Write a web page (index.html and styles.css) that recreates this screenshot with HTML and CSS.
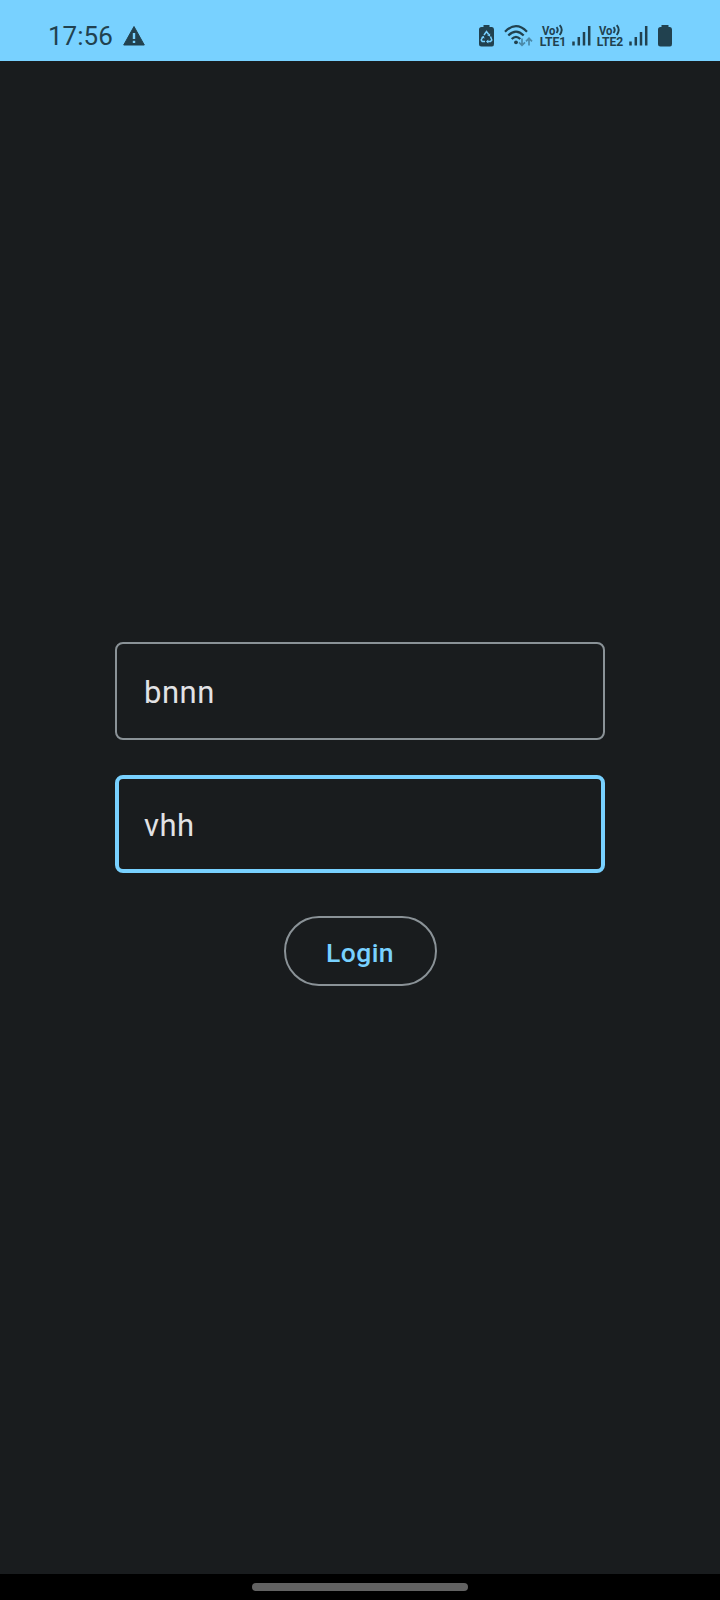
FILE: index.html
```html
<!DOCTYPE html>
<html lang="en">
<head>
<meta charset="utf-8">
<title>Login</title>
<link rel="stylesheet" href="styles.css">
</head>
<body>
<div class="screen">
  <header class="status">
    <span class="clock">17:56</span>
    <svg class="warning" width="24" height="22" viewBox="0 0 24 22"><path fill="currentColor" stroke="currentColor" stroke-linejoin="round" d="M12 1.5 22.3 20H1.7Z"/><path stroke="#78d1ff" stroke-width="2.4" d="M12 8v6M12 15.8v2.3"/></svg>
    <div class="indicators">
      <svg class="saver" width="16" height="22" viewBox="0 0 16 22"><path fill="currentColor" d="M4.500 0h6v2h2.500Q15 2 15 4.500V19Q15 21.500 13 21.500h-10.500Q0 21.500 0 19v-14.500Q0 2 2.500 2H4.500Z"/><path fill="none" stroke="#78d1ff" stroke-width="1.500" d="M5 10 7.500 6.500l2.200 3M11.500 11.500l1.300 3.500-1.300 1.500H8.500M6 16.500H3.200L2.200 15l1.600-3"/><path fill="#78d1ff" d="m11.200 8.500-.2 3-2.800-1.200ZM9.300 14.500v4l-2.300-2ZM2 12.300l2.600-1.500 1 2.800Z"/></svg>
      <svg class="wifi" width="29" height="24" viewBox="0 0 29 24"><g fill="none" stroke="currentColor" stroke-width="2.200"><path d="M1 7.700Q12 -3.500 23 7.700M4.300 11.500Q12 3.700 19.700 11.500M7.700 15Q12 10.700 16.300 15"/></g><circle cx="12" cy="18.300" r="1.900" fill="currentColor"/><path fill="none" stroke="#4b89a8" stroke-width="1.700" d="M18 14.500v7M15 18.300l3 3 3-3M25 21.500v-7M22 17.300l3-3 3 3"/></svg>
      <svg class="volte" width="29" height="26" viewBox="0 0 29 26"><text x="3" y="11.500" textLength="13.500" lengthAdjust="spacingAndGlyphs">Vo</text><path class="wave" d="M17.500 4.200q2.500 2.800 0 5.800M20.700 2.200q4 4.500 0 9.800"/><text x="0.700" y="23.300" textLength="26.500" lengthAdjust="spacingAndGlyphs">LTE1</text></svg>
      <svg class="signal" width="19" height="20" viewBox="0 0 19 20"><path d="M1.500 15.500V19.500M6.800 11v8.500M12 6v13.500M17.200 0v19.500"/></svg>
      <svg class="volte second" width="29" height="26" viewBox="0 0 29 26"><text x="3" y="11.500" textLength="13.500" lengthAdjust="spacingAndGlyphs">Vo</text><path class="wave" d="M17.500 4.200q2.500 2.800 0 5.800M20.700 2.200q4 4.500 0 9.800"/><text x="0.700" y="23.300" textLength="26.500" lengthAdjust="spacingAndGlyphs">LTE2</text></svg>
      <svg class="signal" width="19" height="20" viewBox="0 0 19 20"><path d="M1.500 15.500V19.500M6.800 11v8.500M12 6v13.500M17.200 0v19.500"/></svg>
      <svg class="battery" width="15" height="22" viewBox="0 0 15 22"><path fill="currentColor" d="M3.500 0h7v2h1.500Q14 2 14 4.500v14.500Q14 21.500 12 21.500h-9.500Q0 21.500 0 19v-14.500Q0 2 2.500 2H3.500Z"/></svg>
    </div>
  </header>
  <main class="form">
    <input class="field" type="text" value="bnnn" aria-label="Username">
    <input class="field active" type="text" value="vhh" aria-label="Password">
    <button class="login" type="button">Login</button>
  </main>
  <footer class="navigation"><div class="handle"></div></footer>
</div>
</body>
</html>
```
FILE: styles.css
```css
* { box-sizing: border-box; }
body { margin: 0; background: #191c1e; font-family: Roboto, sans-serif; }
.screen { width: 720px; height: 1600px; display: flex; flex-direction: column; }
.status { height: 60.5px; background: #78d1ff; color: #21414f; display: flex; align-items: center; padding: 11.5px 47px 0 48px; }
.status svg { display: block; flex: none; }
.clock { font-size: 26px; line-height: 30px; width: 64px; }
.warning { margin-left: 10px; }
.indicators { margin-left: auto; display: flex; align-items: center; }
.wifi { margin-left: 9px; }
.volte { margin-left: 6px; }
.volte text { font: 700 12.5px/1 Roboto, sans-serif; fill: currentColor; }
.wave { fill: none; stroke: currentColor; stroke-width: 1.900; }
.volte.second { margin-left: 5px; }
.signal { margin-left: 4px; }
.signal path { stroke: currentColor; stroke-width: 2.500; }
.battery { margin-left: 10px; }
.form { flex: 1; display: flex; flex-direction: column; align-items: center; padding-top: 581.5px; }
.field { width: 490px; height: 98px; padding: 2px 27px 0; border: 2px solid #8a9297; border-radius: 8px; background: transparent; color: #e1e2e5; font: 400 31px Roboto, sans-serif; letter-spacing: .5px; outline: none; }
.field.active { margin-top: 35px; padding: 2px 25px 0; border: 4px solid #78d1ff; }
.login { width: 153px; height: 70px; margin-top: 43px; padding: 3px 0 0; border: 2px solid #8a9297; border-radius: 35px; background: transparent; color: #78d1ff; font: 500 26.5px Roboto, sans-serif; letter-spacing: .4px; }
.navigation { height: 26px; background: #000; display: flex; justify-content: center; align-items: flex-start; padding-top: 9px; }
.handle { width: 216px; height: 8px; border-radius: 4px; background: #626262; }
```
